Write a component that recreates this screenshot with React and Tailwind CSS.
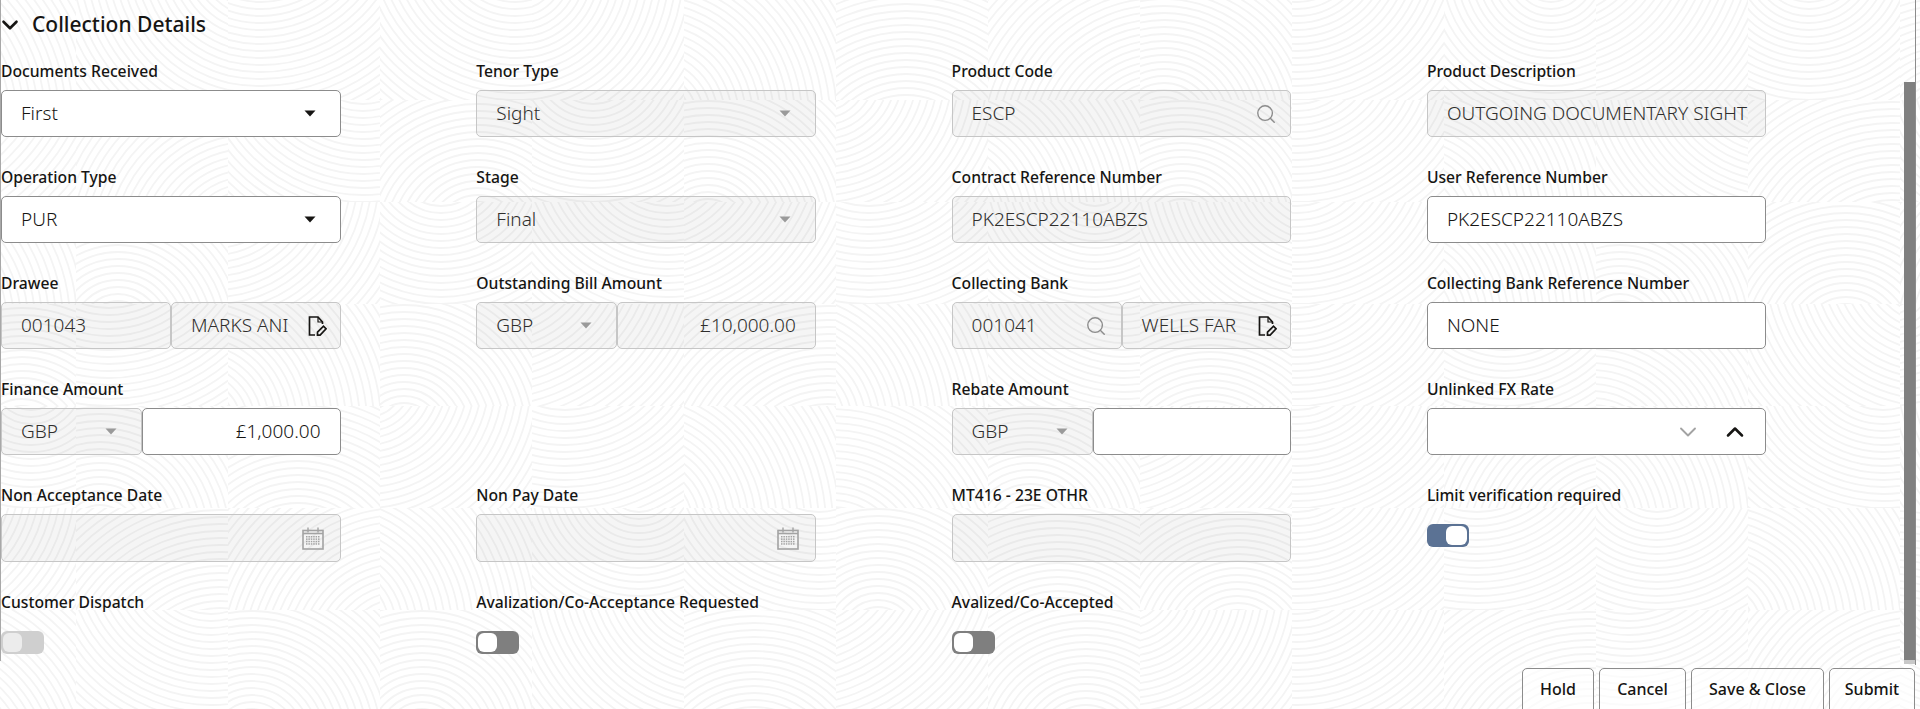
import { ChevronDown, ChevronUp, Search } from 'lucide-react';

// faint fingerprint tiles behind the whole form
function Backdrop() {
  const cells = [];
  for (let row = 0; row < 8; row++) {
    for (let col = 0; col < 14; col++) {
      const seed = (row * 7 + col * 13 + row * col * 3) % 17;
      const x = col * 152 - 76;
      const y = row * 102 - 2;
      const cx = -50 + ((seed * 37) % 250);
      const cy = seed % 2 === 0 ? 120 + (seed * 5) % 70 : -20 - (seed * 7) % 70;
      const rings = [];
      for (let r = 10; r < 320; r += 7) {
        rings.push(<circle key={r} cx={cx} cy={cy} r={r} />);
      }
      cells.push(
        <svg key={`${row}-${col}`} x={x} y={y} width="152" height="102" fill="none" stroke="#f4f4f4" strokeWidth="1.8">
          {rings}
        </svg>
      );
    }
  }
  return (
    <svg className="absolute inset-0 w-full h-full" viewBox="0 0 1920 709">
      {cells}
    </svg>
  );
}

function CaretDown({ muted }) {
  return (
    <svg width="12" height="7" viewBox="0 0 12 7" className="shrink-0">
      <path d="M0.5 0.5h11L6 6.5z" fill={muted ? '#9a9a9a' : '#161513'} />
    </svg>
  );
}

function FileEdit() {
  return (
    <svg width="20" height="22" viewBox="0 0 20 22" fill="none" stroke="#161513" strokeWidth="1.7" className="shrink-0">
      <path d="M8 20H2.5V2h8.5l4.5 5v2" />
      <path d="M11 2v5h4.5" strokeWidth="1.2" />
      <path d="M10.5 20.2v-3l6-6 2.6 2.6-6 6.4z" />
    </svg>
  );
}

function Calendar() {
  const dots = [];
  for (let r = 0; r < 4; r++) {
    for (let c = 0; c < 6; c++) {
      dots.push(<rect key={`${r}${c}`} x={4 + c * 2.4} y={9 + r * 2.4} width="1.5" height="1.5" fill="#a3a3a3" />);
    }
  }
  return (
    <svg width="22" height="23" viewBox="0 0 22 23" fill="none" className="shrink-0">
      <rect x="1" y="3.5" width="20" height="18.5" stroke="#a3a3a3" strokeWidth="1.6" />
      <path d="M1 6.5h20" stroke="#a3a3a3" strokeWidth="1.6" />
      <path d="M6 0.5v5M16 0.5v5" stroke="#a3a3a3" strokeWidth="1.4" />
      {dots}
    </svg>
  );
}

function Box({ disabled, tall, className = '', children }) {
  return (
    <div
      className={`min-w-0 flex items-center rounded-[5px] border px-[19px] text-[19px] font-light ${
        disabled ? 'bg-black/[.04] border-[#c6c6c6] text-[#2f2e2c]' : 'bg-white border-[#8c8c8c] text-[#161513]'
      } ${tall ? 'h-[48px]' : 'h-[47px]'} ${className}`}
    >
      {children}
    </div>
  );
}

function Field({ label, children, toggle }) {
  return (
    <div>
      <div className="h-[20px] leading-[20px] text-[15.7px] font-medium text-[#161513] whitespace-nowrap">{label}</div>
      <div className={toggle ? 'mt-[19px]' : 'mt-[9px]'}>{children}</div>
    </div>
  );
}

function CurrencyPair({ value, disabled }) {
  return (
    <div className="flex">
      <Box disabled className="w-[141px] shrink-0 justify-between pr-[24px]">
        <span>GBP</span>
        <CaretDown muted />
      </Box>
      <Box disabled={disabled} className="flex-1 justify-end pr-[19px]">{value}</Box>
    </div>
  );
}

function Toggle({ on, faded }) {
  if (on) {
    return (
      <div className="w-[42px] h-[23px] rounded-[6px] bg-[#5b7294] flex justify-end p-[2px]">
        <div className="w-[21px] h-[19px] rounded-[6px] bg-white" />
      </div>
    );
  }
  return (
    <div className={`w-[43px] h-[23px] rounded-[6px] p-[2px] ${faded ? 'bg-[#cfcfcf]' : 'bg-[#7f7f7f]'}`}>
      <div className={`w-[19px] h-[19px] rounded-[6px] ${faded ? 'bg-[#ececec]' : 'bg-white'}`} />
    </div>
  );
}

function ActionButton({ label, width }) {
  return (
    <button className={`${width} h-[56px] pb-[15px] rounded-[5px] border border-[#8c8c8c] bg-white/60 text-[16px] font-medium text-[#161513]`}>
      {label}
    </button>
  );
}

export default function App() {
  return (
    <div className="relative h-[709px] overflow-hidden bg-white font-['Noto_Sans',sans-serif]">
      <Backdrop />

      <div className="relative h-[661px] border-l border-[#a8a8a8]">
        <div className="h-[50px] flex items-center gap-[9px]">
          <ChevronDown size={26} strokeWidth={2.4} color="#161513" className="-ml-[4px]" />
          <h2 className="text-[21px] font-medium text-[#161513]">Collection Details</h2>
        </div>

        <div className="mt-[11px] grid grid-cols-[repeat(4,339.5px)] gap-x-[135.8px] gap-y-[30px]">
          <Field label="Documents Received">
            <Box className="justify-between pr-[24px]"><span>First</span><CaretDown /></Box>
          </Field>
          <Field label="Tenor Type">
            <Box disabled className="justify-between pr-[24px]"><span>Sight</span><CaretDown muted /></Box>
          </Field>
          <Field label="Product Code">
            <Box disabled className="justify-between pr-[13px]"><span>ESCP</span><Search size={22} strokeWidth={1.5} color="#8c8c8c" /></Box>
          </Field>
          <Field label="Product Description">
            <Box disabled className="whitespace-nowrap">OUTGOING DOCUMENTARY SIGHT</Box>
          </Field>

          <Field label="Operation Type">
            <Box className="justify-between pr-[24px]"><span>PUR</span><CaretDown /></Box>
          </Field>
          <Field label="Stage">
            <Box disabled className="justify-between pr-[24px]"><span>Final</span><CaretDown muted /></Box>
          </Field>
          <Field label="Contract Reference Number">
            <Box disabled>PK2ESCP22110ABZS</Box>
          </Field>
          <Field label="User Reference Number">
            <Box>PK2ESCP22110ABZS</Box>
          </Field>

          <Field label="Drawee">
            <div className="flex">
              <Box disabled className="w-[170px] shrink-0">001043</Box>
              <Box disabled className="flex-1 justify-between pl-[19px] pr-[13px] whitespace-nowrap"><span>MARKS ANI</span><FileEdit /></Box>
            </div>
          </Field>
          <Field label="Outstanding Bill Amount">
            <CurrencyPair value="£10,000.00" disabled />
          </Field>
          <Field label="Collecting Bank">
            <div className="flex">
              <Box disabled className="w-[170px] shrink-0 justify-between pr-[14px]"><span>001041</span><Search size={22} strokeWidth={1.5} color="#8c8c8c" /></Box>
              <Box disabled className="flex-1 justify-between pl-[19px] pr-[13px] whitespace-nowrap"><span>WELLS FAR</span><FileEdit /></Box>
            </div>
          </Field>
          <Field label="Collecting Bank Reference Number">
            <Box>NONE</Box>
          </Field>

          <Field label="Finance Amount">
            <CurrencyPair value="£1,000.00" />
          </Field>
          <div />
          <Field label="Rebate Amount">
            <CurrencyPair value="" />
          </Field>
          <Field label="Unlinked FX Rate">
            <Box className="justify-end gap-[19px] pr-[16px]">
              <ChevronDown size={28} strokeWidth={1.6} color="#a3a3a3" />
              <ChevronUp size={28} strokeWidth={2.2} color="#161513" />
            </Box>
          </Field>

          <Field label="Non Acceptance Date">
            <Box disabled tall className="justify-end pr-[16px]"><Calendar /></Box>
          </Field>
          <Field label="Non Pay Date">
            <Box disabled tall className="justify-end pr-[16px]"><Calendar /></Box>
          </Field>
          <Field label="MT416 - 23E OTHR">
            <Box disabled tall />
          </Field>
          <Field label="Limit verification required" toggle>
            <Toggle on />
          </Field>

          <Field label="Customer Dispatch" toggle>
            <Toggle faded />
          </Field>
          <Field label="Avalization/Co-Acceptance Requested" toggle>
            <Toggle />
          </Field>
          <Field label="Avalized/Co-Accepted" toggle>
            <Toggle />
          </Field>
        </div>

        {/* scrollbar */}
        <div className="absolute top-0 right-[4px] -bottom-[4px] w-[12px] border-r border-[#8c8c8c]">
          <div className="mt-[82px] h-[578px] bg-[#808080]" />
          <div className="h-[4px] bg-[#c8c8c8]" />
        </div>
      </div>

      <div className="relative flex justify-end gap-[5px] pt-[7px] pr-[5px]">
        <ActionButton label="Hold" width="w-[72px]" />
        <ActionButton label="Cancel" width="w-[87px]" />
        <ActionButton label="Save & Close" width="w-[133px]" />
        <ActionButton label="Submit" width="w-[86px]" />
        <svg width="9" height="5" viewBox="0 0 9 5" className="absolute right-[6px] bottom-[6px]">
          <path d="M0 0h9L4.5 5z" fill="#b5b5b5" />
        </svg>
      </div>
    </div>
  );
}
